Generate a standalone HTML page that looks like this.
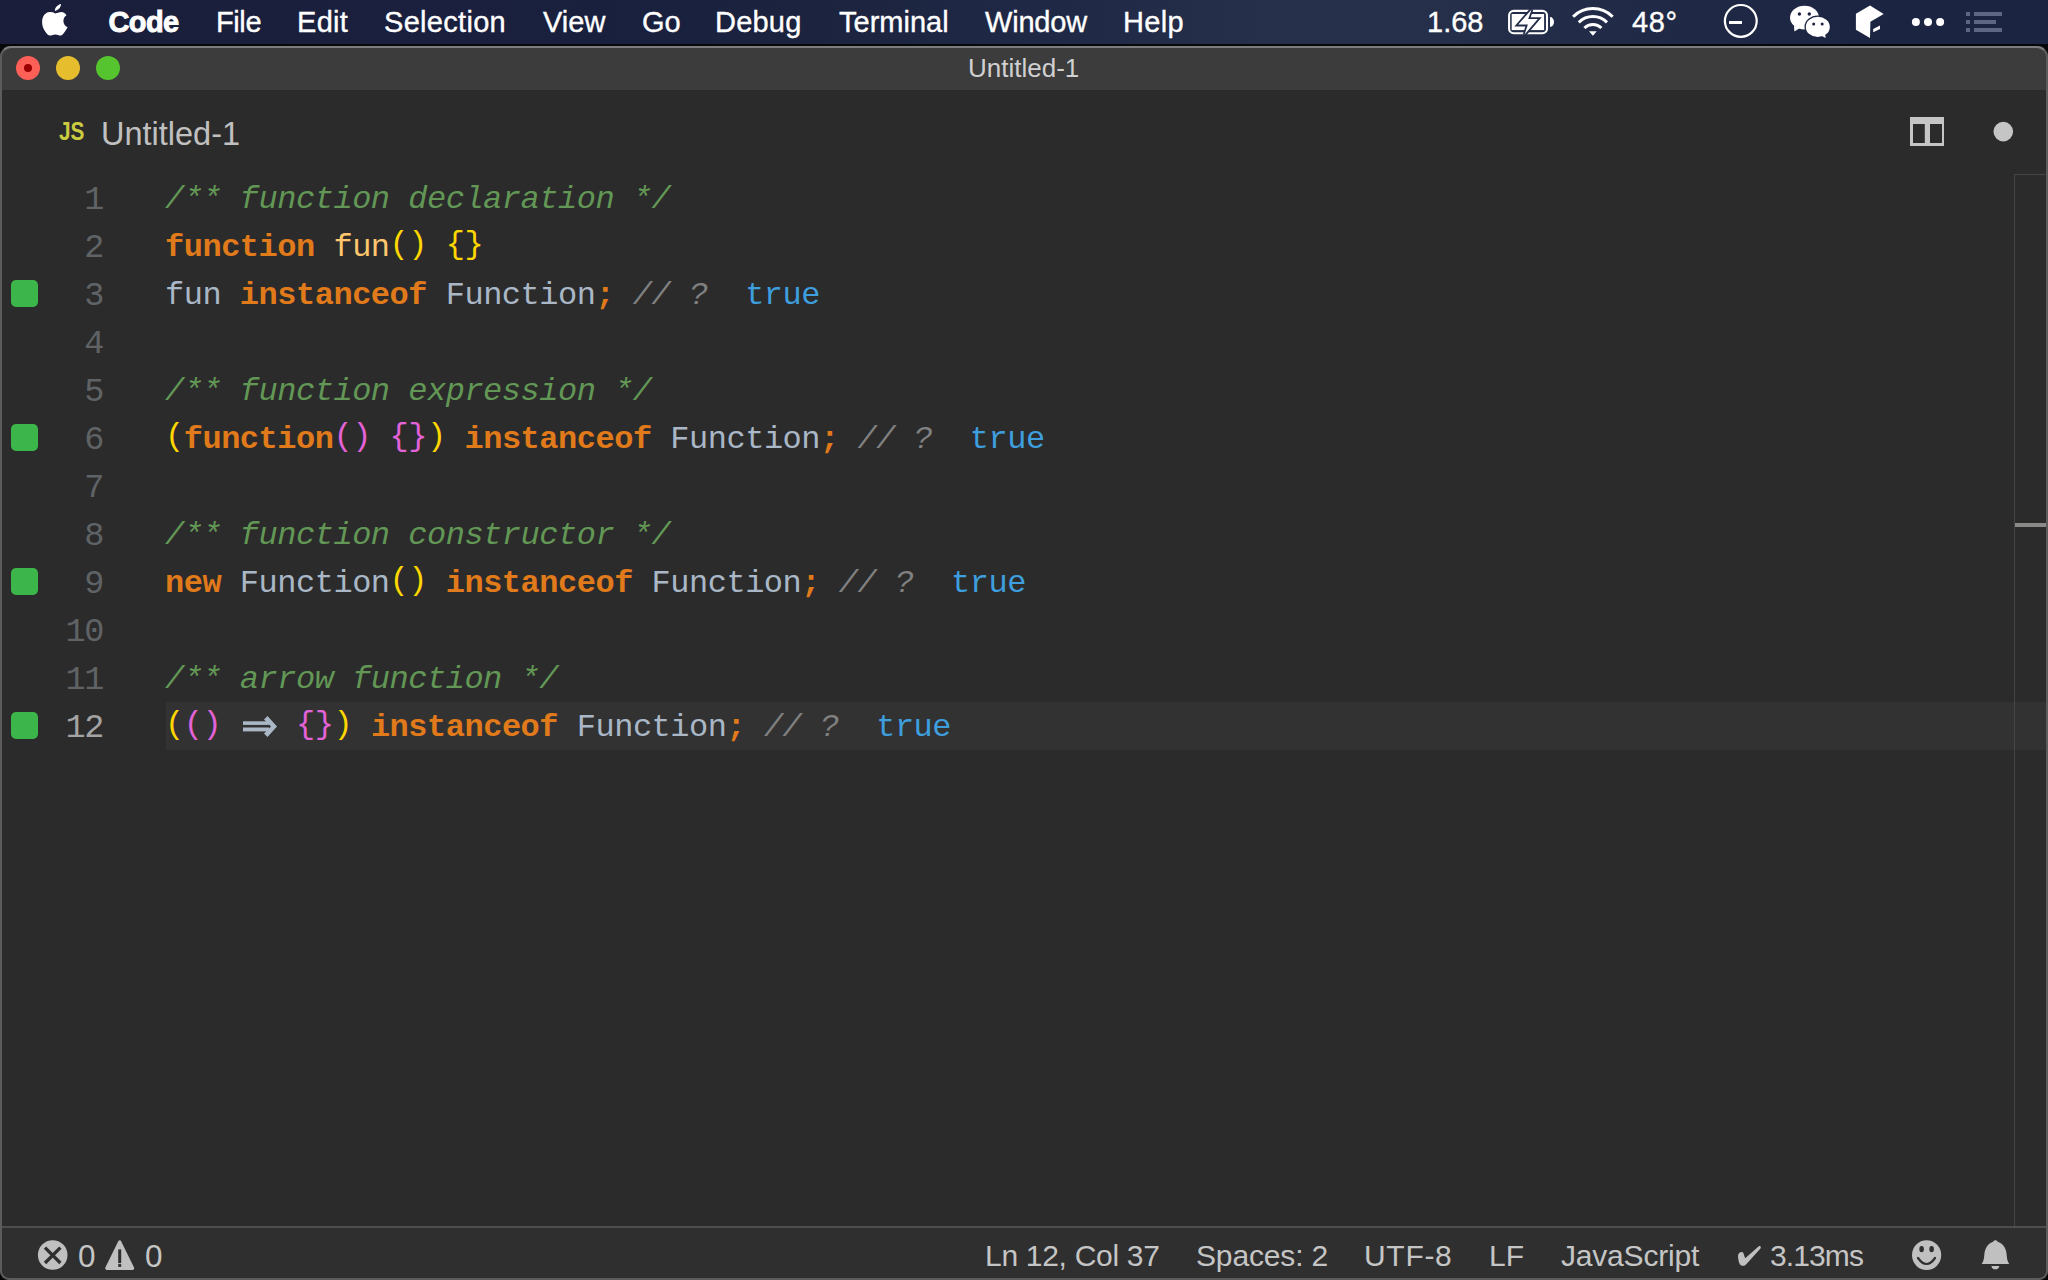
<!DOCTYPE html>
<html><head><meta charset="utf-8">
<style>
*{margin:0;padding:0;box-sizing:border-box}
html,body{width:2048px;height:1280px;overflow:hidden;background:#060709}
body{position:relative;font-family:"Liberation Sans",sans-serif}
.a{position:absolute}
#menubar{left:0;top:0;width:2048px;height:44px;background:linear-gradient(90deg,#1a1e3a 0%,#19203e 30%,#1c243f 42%,#1f2946 51%,#26304a 63%,#252f4a 71%,#202a46 81%,#1b2440 93%,#1b2440 100%)}
#shadow{left:0;top:44px;width:2048px;height:3px;background:#07080c}
.mi{position:absolute;top:0;height:44px;line-height:44px;color:#fff;font-size:29px;white-space:nowrap;-webkit-text-stroke:0.35px #fff}
#win{left:0;top:46px;width:2048px;height:1234px;background:#2b2b2b;border-radius:11px 11px 9px 9px;overflow:hidden}
#frame{left:0;top:46px;width:2048px;height:1234px;border:2px solid #5c5c5c;border-top-color:#7d7d7d;border-radius:11px 11px 9px 9px;pointer-events:none}
.tl{position:absolute;top:56px;width:24px;height:24px;border-radius:50%}
.ln{position:absolute;left:0;width:2048px;height:48px}
.num{position:absolute;left:0;width:103px;top:2px;height:48px;line-height:48px;font-family:"Liberation Mono",monospace;font-size:33.5px;letter-spacing:-1.3px;color:#606366;text-align:right}
.txt{position:absolute;left:165px;top:2px;height:48px;line-height:48px;font-family:"Liberation Mono",monospace;font-size:32px;letter-spacing:-0.49px;color:#a9b7c6;white-space:pre}
.sq{position:absolute;left:10.5px;top:10.4px;width:27px;height:27px;border-radius:5px;background:#3cb54a}
.c{color:#629755;font-style:italic}
.k{color:#e07a1a;font-weight:bold}
.f{color:#ffc66d}
.y{color:#ffd700;position:relative;top:-3px}
.p{color:#e462d8;position:relative;top:-3px}
.g{color:#808080;font-style:italic}
.t{color:#3e9ede}
.st{position:absolute;top:1231px;height:50px;line-height:50px;font-size:30px;color:#c5c5c5;white-space:nowrap}
</style></head>
<body>
<div id="menubar" class="a"></div>
<div id="shadow" class="a"></div>
<div class="a" style="left:0;top:44px;width:2048px;height:14px;background:#07080c"></div>
<svg class="a" style="left:0;top:0" width="80" height="44"><path fill="#fff" d="M55.4 13.4C53.5 12.3 51.5 11.8 49.4 12C45 12.4 42.1 16.5 42.1 22C42.1 26 43.5 29.5 45.4 31.8C46.8 33.8 48.3 35.6 50.1 35.6C52 35.6 53 34.4 55.4 34.4C57.8 34.4 58.5 35.6 60.4 35.6C62.3 35.6 63.6 33.6 64.8 31.8C66 30 67 28.5 67.6 27.2C65 26 63.4 23.6 63.4 20.9C63.4 18.4 64.7 16.4 66.5 15.2C65 13 63.2 12.1 61.4 12.1C58.8 12.1 57.3 13.4 55.4 13.4Z M54.9 10.9C54.8 8 57.5 4.8 61 4.1C61.1 7.2 58.3 10.5 54.9 10.9Z"/></svg>
<div class="mi" style="left:108.5px;font-weight:bold;-webkit-text-stroke:0.9px #fff;letter-spacing:-0.6px">Code</div>
<div class="mi" style="left:216px;letter-spacing:-0.4px">File</div>
<div class="mi" style="left:297px;letter-spacing:0.3px">Edit</div>
<div class="mi" style="left:384px;letter-spacing:0.3px">Selection</div>
<div class="mi" style="left:543px">View</div>
<div class="mi" style="left:642px">Go</div>
<div class="mi" style="left:715px;letter-spacing:0.2px">Debug</div>
<div class="mi" style="left:839px">Terminal</div>
<div class="mi" style="left:985px;letter-spacing:-0.2px">Window</div>
<div class="mi" style="left:1123px;letter-spacing:0.3px">Help</div>
<div class="mi" style="left:1427px">1.68</div>
<div class="mi" style="left:1632px;letter-spacing:0.6px">48°</div>
<!-- status icons -->
<svg class="a" style="left:0;top:0" width="2048" height="44">
  <!-- battery -->
  <rect x="1509.1" y="10.9" width="37.9" height="22.3" rx="4.5" fill="none" stroke="#fff" stroke-width="2.1"/>
  <rect x="1511.7" y="14" width="32.4" height="16.1" fill="#fff"/>
  <path d="M1550 17 A4 5 0 0 1 1550 27 Z" fill="#fff"/>
  <polygon points="1531.6,9.4 1518.3,24.6 1527.9,24.6 1524.6,34.6 1537.8,19.0 1528.2,19.0" fill="#fff" stroke="#232c48" stroke-width="3.6" stroke-linejoin="miter"/>
  <polygon points="1531.6,9.4 1518.3,24.6 1527.9,24.6 1524.6,34.6 1537.8,19.0 1528.2,19.0" fill="#fff"/>
  <!-- wifi -->
  <g fill="none" stroke="#fff" stroke-width="3" stroke-linecap="butt">
    <path d="M1573.1 16.7 A28 28 0 0 1 1612.7 16.7"/>
    <path d="M1578.8 22.4 A20 20 0 0 1 1607 22.4"/>
    <path d="M1584.4 28 A12 12 0 0 1 1601.4 28"/>
  </g>
  <polygon points="1589,31.2 1596.8,31.2 1592.9,35.8" fill="#fff"/>
  <!-- dnd circle -->
  <circle cx="1740.8" cy="20.9" r="15.9" fill="none" stroke="#fff" stroke-width="2.2"/>
  <rect x="1729" y="21" width="13" height="3" fill="#fff"/>
  <!-- wechat -->
  <ellipse cx="1804.5" cy="17.6" rx="14.5" ry="11.9" fill="#fff"/>
  <polygon points="1794,26 1794.4,31.5 1800,28" fill="#fff"/>
  <circle cx="1799.4" cy="14" r="1.7" fill="#1c2140"/>
  <circle cx="1809.3" cy="14" r="1.7" fill="#1c2140"/>
  <ellipse cx="1817.8" cy="26.9" rx="13.3" ry="11.5" fill="#1d2342"/>
  <ellipse cx="1817.8" cy="26.9" rx="12" ry="10.2" fill="#fff"/>
  <polygon points="1820,35 1825.6,38 1825,32" fill="#fff"/>
  <circle cx="1813.7" cy="24" r="1.5" fill="#1c2140"/>
  <circle cx="1822.2" cy="24" r="1.5" fill="#1c2140"/>
  <!-- box -->
  <polygon points="1870,5.6 1883.7,14.1 1870.4,21.7 1870,37.9 1855.9,29.8 1855.9,13.7" fill="#fff"/>
  <polygon points="1873.2,29 1880,25.4 1880,29 1873.2,32.2" fill="#fff"/>
  <!-- dots -->
  <circle cx="1915.9" cy="22" r="4" fill="#fff"/>
  <circle cx="1928" cy="22" r="4" fill="#fff"/>
  <circle cx="1940.1" cy="22" r="4" fill="#fff"/>
  <!-- list -->
  <g fill="#5e6682">
    <rect x="1966" y="12" width="4" height="4"/><rect x="1974" y="12" width="28" height="4"/>
    <rect x="1966" y="20" width="4" height="4"/><rect x="1974" y="20" width="22" height="4"/>
    <rect x="1966" y="28" width="4" height="4"/><rect x="1974" y="28" width="28" height="4"/>
  </g>
</svg>

<div id="win" class="a">
  <div class="a" style="left:0;top:0;width:2048px;height:44px;background:#3c3c3c"></div>
</div>
<div class="tl" style="left:16px;background:#fe5f57"><div style="position:absolute;left:8px;top:8px;width:8px;height:8px;border-radius:50%;background:#9a0000"></div></div>
<div class="tl" style="left:56px;background:#e5bd2d"></div>
<div class="tl" style="left:96px;background:#55c42f"></div>
<div class="a" style="left:968px;top:47px;height:42px;line-height:42px;font-size:26px;color:#d0d0d0">Untitled-1</div>

<!-- tab -->
<div class="a" style="left:59px;top:116px;font-size:26px;font-weight:bold;color:#cbcb41;line-height:30px;transform:scaleX(0.8);transform-origin:0 0">JS</div>
<div class="a" style="left:101px;top:114px;font-size:32.5px;color:#c0c0c0;line-height:40px">Untitled-1</div>
<svg class="a" style="left:1900px;top:110px" width="120" height="44">
  <path fill="#c5c5c5" fill-rule="evenodd" d="M10 7H44V36H10Z M13 14V33H24.8V14Z M30 14V33H42V14Z"/>
  <circle cx="103.3" cy="21.6" r="9.8" fill="#c5c5c5"/>
</svg>

<!-- code -->
<div class="ln" style="top:174px"><div class="num">1</div><div class="txt"><span class="c">/** function declaration */</span></div></div>
<div class="ln" style="top:222px"><div class="num">2</div><div class="txt"><span class="k">function</span> <span class="f">fun</span><span class="y">()</span> <span class="y">{}</span></div></div>
<div class="ln" style="top:270px"><div class="sq"></div><div class="num">3</div><div class="txt">fun <span class="k">instanceof</span> Function<span class="k">;</span> <span class="g">// ?</span>  <span class="t">true</span></div></div>
<div class="ln" style="top:318px"><div class="num">4</div></div>
<div class="ln" style="top:366px"><div class="num">5</div><div class="txt"><span class="c">/** function expression */</span></div></div>
<div class="ln" style="top:414px"><div class="sq"></div><div class="num">6</div><div class="txt"><span class="y">(</span><span class="k">function</span><span class="p">()</span> <span class="p">{}</span><span class="y">)</span> <span class="k">instanceof</span> Function<span class="k">;</span> <span class="g">// ?</span>  <span class="t">true</span></div></div>
<div class="ln" style="top:462px"><div class="num">7</div></div>
<div class="ln" style="top:510px"><div class="num">8</div><div class="txt"><span class="c">/** function constructor */</span></div></div>
<div class="ln" style="top:558px"><div class="sq"></div><div class="num">9</div><div class="txt"><span class="k">new</span> Function<span class="y">()</span> <span class="k">instanceof</span> Function<span class="k">;</span> <span class="g">// ?</span>  <span class="t">true</span></div></div>
<div class="ln" style="top:606px"><div class="num">10</div></div>
<div class="ln" style="top:654px"><div class="num">11</div><div class="txt"><span class="c">/** arrow function */</span></div></div>
<div class="ln" style="top:702px"><div class="a" style="left:166px;top:0;width:1880px;height:48px;background:#323232"></div><div class="sq"></div><div class="num" style="color:#a4a3a3">12</div><div class="txt"><span class="y">(</span><span class="p">()</span>    <span class="p">{}</span><span class="y">)</span> <span class="k">instanceof</span> Function<span class="k">;</span> <span class="g">// ?</span>  <span class="t">true</span></div>
  <svg class="a" style="left:243px;top:0" width="36" height="48"><rect x="0" y="19.3" width="26" height="3.6" fill="#a9b7c6"/><rect x="0" y="25.5" width="26" height="3.9" fill="#a9b7c6"/><polygon points="21,17.5 24.5,14 34,24.5 24.5,35 21,31.5 28,24.5" fill="#a9b7c6"/></svg>
</div>

<!-- overview ruler -->
<div class="a" style="left:2014px;top:174px;width:1px;height:1052px;background:#454545"></div>
<div class="a" style="left:2015px;top:174px;width:31px;height:1px;background:#454545"></div>
<div class="a" style="left:2015px;top:523px;width:31px;height:4px;background:#8a8a88"></div>

<!-- status bar -->
<div class="a" style="left:0;top:1226px;width:2048px;height:2px;background:#4e4e4e"></div>
<div class="a" style="left:0;top:1228px;width:2048px;height:52px;background:#2f2f2f;border-radius:0 0 9px 9px"></div>
<svg class="a" style="left:0;top:1228px" width="2048" height="52">
  <circle cx="52.7" cy="27" r="14.8" fill="#c0c0c0"/>
  <path d="M45 19.6L60.4 35M60.4 19.6L45 35" stroke="#2f2f2f" stroke-width="3.3"/>
  <polygon points="119.7,13.9 106.8,40.3 132.6,40.3" fill="#c0c0c0" stroke="#c0c0c0" stroke-width="3.2" stroke-linejoin="round"/>
  <rect x="118.2" y="21.4" width="3" height="13.7" fill="#2f2f2f"/>
  <rect x="118.2" y="36.1" width="3" height="2.8" fill="#2f2f2f"/>
  <ellipse cx="1926.6" cy="27.1" rx="14.6" ry="14.9" fill="#c0c0c0"/>
  <ellipse cx="1921.6" cy="21.1" rx="2.3" ry="3.2" fill="#2f2f2f"/>
  <ellipse cx="1931.6" cy="21.1" rx="2.3" ry="3.2" fill="#2f2f2f"/>
  <path d="M1918 30 Q1926.5 42 1935 30" fill="none" stroke="#2f2f2f" stroke-width="2.2" stroke-linecap="round"/>
  <path d="M1995.4 12.2 C1997 12.2 1997.5 13.2 1997.6 13.8 C2003 15.5 2006 20 2006.6 26 C2007 31 2007.5 33.5 2009.3 35.9 L1981.7 35.9 C1983.5 33.5 1984 31 1984.4 26 C1985 20 1988 15.5 1993.2 13.8 C1993.3 13.2 1993.8 12.2 1995.4 12.2Z" fill="#c0c0c0"/>
  <path d="M1991.4 38 L1999.3 38 A4 4 0 0 1 1991.4 38Z" fill="#c0c0c0"/>
  <path transform="translate(0,-1228)" d="M1741.7 1252 C1743.3 1252 1743.8 1253.5 1744 1255 L1745.2 1258.2 L1758.5 1246.5 C1760 1245.5 1761.5 1246.5 1760.5 1248.5 L1746 1264.5 C1744.5 1266.3 1741.5 1266.3 1740 1264.5 C1738.5 1262 1738 1258 1738 1256 C1738 1253.5 1740 1252 1741.7 1252 Z" fill="#c0c0c0"/>
</svg>
<div class="st" style="left:78px;font-size:31.5px;top:1230.5px">0</div>
<div class="st" style="left:145px;font-size:31.5px;top:1230.5px">0</div>
<div class="st" style="left:985px;letter-spacing:-0.3px">Ln 12, Col 37</div>
<div class="st" style="left:1196px;letter-spacing:-0.15px">Spaces: 2</div>
<div class="st" style="left:1364px;letter-spacing:0.7px">UTF-8</div>
<div class="st" style="left:1489px">LF</div>
<div class="st" style="left:1561px;letter-spacing:-0.2px">JavaScript</div>
<div class="st" style="left:1770px;letter-spacing:-0.9px">3.13ms</div>

<div id="frame" class="a"></div>
</body></html>
